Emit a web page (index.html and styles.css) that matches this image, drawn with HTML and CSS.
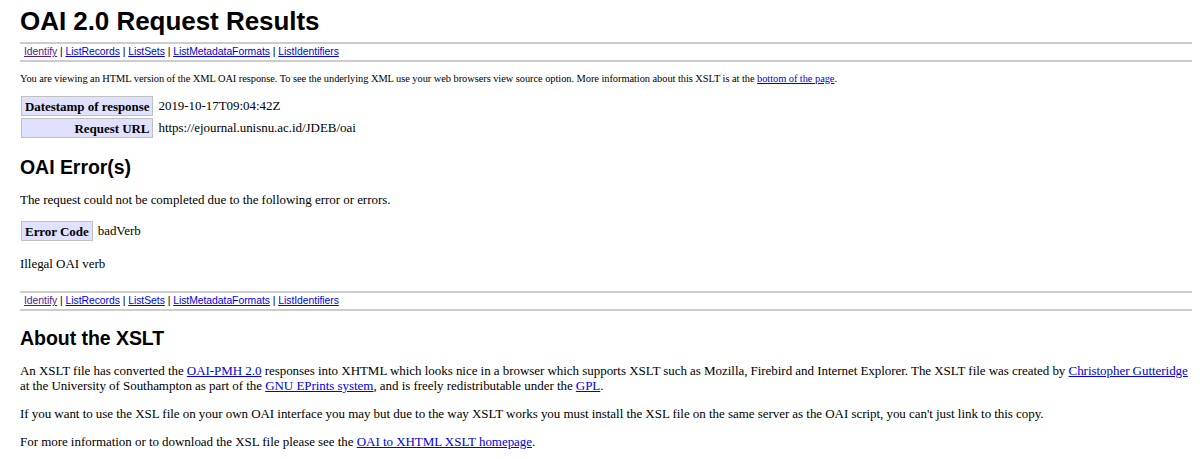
FILE: index.html
```html
<!DOCTYPE html>
<html>
<head>
<meta charset="utf-8">
<title>OAI 2.0 Request Results</title>
<link rel="stylesheet" href="styles.css">
</head>
<body>
<h1>OAI 2.0 Request Results</h1>
<ul class="quicklinks">
<li><a class="visited" href="#">Identify</a> | </li><li><a href="#">ListRecords</a> | </li><li><a href="#">ListSets</a> | </li><li><a href="#">ListMetadataFormats</a> | </li><li><a href="#">ListIdentifiers</a></li>
</ul>
<p class="intro">You are viewing an HTML version of the XML OAI response. To see the underlying XML use your web browsers view source option. More information about this XSLT is at the <a href="#about">bottom of the page</a>.</p>
<table class="values">
<tr><td class="key">Datestamp of response</td><td class="value">2019-10-17T09:04:42Z</td></tr>
<tr><td class="key">Request URL</td><td class="value">https://ejournal.unisnu.ac.id/JDEB/oai</td></tr>
</table>
<h2>OAI Error(s)</h2>
<div class="results">
<p>The request could not be completed due to the following error or errors.</p>
<table class="values">
<tr><td class="key">Error Code</td><td class="value">badVerb</td></tr>
</table>
<p class="error">Illegal OAI verb</p>
</div>
<ul class="quicklinks">
<li><a class="visited" href="#">Identify</a> | </li><li><a href="#">ListRecords</a> | </li><li><a href="#">ListSets</a> | </li><li><a href="#">ListMetadataFormats</a> | </li><li><a href="#">ListIdentifiers</a></li>
</ul>
<h2 id="about">About the XSLT</h2>
<p>An XSLT file has converted the <a href="#">OAI-PMH 2.0</a> responses into XHTML which looks nice in a browser which supports XSLT such as Mozilla, Firebird and Internet Explorer. The XSLT file was created by <a href="#">Christopher Gutteridge</a> at the University of Southampton as part of the <a href="#">GNU EPrints system</a>, and is freely redistributable under the <a href="#">GPL</a>.</p>
<p>If you want to use the XSL file on your own OAI interface you may but due to the way XSLT works you must install the XSL file on the same server as the OAI script, you can't just link to this copy.</p>
<p>For more information or to download the XSL file please see the <a href="#">OAI to XHTML XSLT homepage</a>.</p>
</body>
</html>
```
FILE: styles.css
```css
html, body {
  background: #fff;
}
body {
  margin: 0 8px 0 20px;
  font-family: "Liberation Serif", "Times New Roman", serif;
  font-size: 13px;
  letter-spacing: -0.045px;
  color: #000;
}
a {
  color: #0000ee;
}
a.visited {
  color: #551a8b;
}
h1, h2 {
  font-family: "Liberation Sans", Arial, sans-serif;
  font-weight: bold;
}
h1 {
  font-size: 26px;
  line-height: 30px;
  margin: 6px 0 0;
  padding-bottom: 4px;
}
h2 {
  font-size: 19.5px;
  line-height: 23px;
  margin: 16px 0 10px;
}
p {
  margin: 13px 0;
  line-height: 15px;
}
ul.quicklinks {
  margin: 2px 0 0;
  padding: 2px 4px;
  border-top: 2px solid #ccc;
  border-bottom: 2px solid #ccc;
  list-style: none;
  font-family: "Liberation Sans", Arial, sans-serif;
  font-size: 10.4px;
  line-height: 12px;
}
ul.quicklinks li {
  display: inline;
}
p.intro {
  font-size: 10.4px;
  line-height: 12px;
  margin: 10.5px 0;
}
table.values {
  border-spacing: 2px;
  margin-top: -1px;
  margin-left: -1px;
  font-size: 13px;
}
td.key {
  background-color: #e0e0ff;
  border: 1px solid #c0c0c0;
  padding: 1.5px 3px;
  line-height: 15px;
  text-align: right;
  white-space: nowrap;
  font-weight: bold;
  vertical-align: top;
}
td.value {
  padding: 1.5px 3px;
  line-height: 15px;
  vertical-align: top;
}
.results {
  margin-bottom: 20px;
}
```
